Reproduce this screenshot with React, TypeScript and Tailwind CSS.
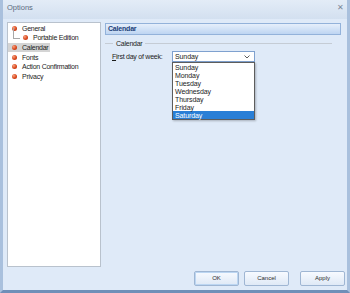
import React from "react";

const font = { fontFamily: '"Liberation Sans", Arial, sans-serif' };

const Bullet: React.FC = () => (
  <span className="inline-block w-[5px] h-[5px] rounded-full bg-[radial-gradient(circle_at_35%_35%,#f7a27e_0%,#d9461c_55%,#a82b0c_100%)] shrink-0" />
);

const TreeItem: React.FC<{ label: string; indent?: boolean; selected?: boolean }> = ({
  label,
  indent,
  selected,
}) => (
  <div className="h-[9.6px] flex items-center relative">
    {indent && (
      <>
        <span className="absolute left-[5px] top-[-5px] w-px h-[10px] bg-[#a8a8a8]" />
        <span className="absolute left-[5px] top-[4.5px] w-[7px] h-px bg-[#a8a8a8]" />
      </>
    )}
    <div
      className={`flex items-center h-[9px] pr-[2px] ${indent ? "pl-[15px]" : "pl-[4px]"} ${
        selected ? "bg-[#d4d4d4]" : ""
      }`}
    >
      <Bullet />
      <span className="ml-[5px] text-[7px] leading-none tracking-[-0.25px] text-[#1b1b1b]">{label}</span>
    </div>
  </div>
);

const days = ["Sunday", "Monday", "Tuesday", "Wednesday", "Thursday", "Friday", "Saturday"];

const Button: React.FC<{ label: string; primary?: boolean; className?: string }> = ({ label, primary, className }) => (
  <div
    className={`w-[45px] h-[15px] flex items-center justify-center rounded-[2px] border border-[#9fb6d3] bg-gradient-to-b from-[#f7faff] to-[#dfe9f6] text-[6px] text-[#2b2b2b] ${
      primary ? "shadow-[inset_0_0_0_1px_#bcd6f2]" : ""
    } ${className ?? ""}`}
  >
    {label}
  </div>
);

export default function App() {
  return (
    <div
      style={font}
      className="w-[350px] h-[293px] flex flex-col bg-[#dfeaf8] border-l-[3px] border-r-[3px] border-b-[3px] border-l-[#a9c0dd] border-r-[#a9c0dd] border-b-[#6f8fb8] overflow-hidden"
    >
      {/* title bar */}
      <div className="h-[19px] shrink-0 flex items-center justify-between pl-[4px] pr-[3px] bg-gradient-to-b from-[#e3ecf7] to-[#d3e0f0]">
        <span className="text-[7.5px] text-[#5b6b80] -mt-[3px]">Options</span>
        <span className="text-[8px] text-[#7b8898] -mt-[4px]">✕</span>
      </div>

      <div className="flex-1 flex flex-col">
        <div className="flex mt-[3px] pl-[4px] pr-[6px] h-[245px]">
          {/* tree */}
          <div className="w-[94px] h-full bg-white border border-[#b9c2cd] pt-[0.5px]">
            <TreeItem label="General" />
            <TreeItem label="Portable Edition" indent />
            <TreeItem label="Calendar" selected />
            <TreeItem label="Fonts" />
            <TreeItem label="Action Confirmation" />
            <TreeItem label="Privacy" />
          </div>

          {/* right panel */}
          <div className="flex-1 ml-[4px] pt-[1px] relative">
            <div className="h-[12px] flex items-center pl-[2px] border border-[#93b2da] bg-gradient-to-b from-[#e6effb] to-[#bed5f2]">
              <span className="text-[7px] font-bold text-[#1c3f78] tracking-[-0.2px]">Calendar</span>
            </div>

            <div className="flex items-center mt-[7px] h-[2px]">
              <span className="w-[8px] h-px bg-[#c5ccd5]" />
              <span className="mx-[3px] text-[7px] leading-none tracking-[-0.25px] text-[#1b1b1b]">Calendar</span>
              <span className="w-[187px] h-px bg-[#c5ccd5]" />
            </div>

            <div className="flex items-center mt-[7px] h-[11px] pl-[7px]">
              <span className="w-[60px] text-[7px] leading-none tracking-[-0.25px] text-[#1b1b1b]">
                <span className="underline">F</span>irst day of week:
              </span>
              <div className="w-[83px] h-[11px] border border-[#7fa1cf] bg-white flex items-center justify-between pl-[2px] pr-[4px]">
                <span className="text-[7px] leading-none tracking-[-0.1px] text-[#1b1b1b]">Sunday</span>
                <svg width="6" height="4" viewBox="0 0 6 4">
                  <path d="M0.5 0.5 L3 3 L5.5 0.5" stroke="#4a4a4a" strokeWidth="0.9" fill="none" />
                </svg>
              </div>
            </div>

            {/* dropdown list */}
            <div className="absolute left-[67px] top-[40px] w-[83px] border border-[#5d5d5d] bg-white shadow-[1px_1px_2px_rgba(0,0,0,0.25)]">
              {days.map((d) => (
                <div
                  key={d}
                  className={`h-[8px] flex items-center pl-[2px] text-[7px] leading-none tracking-[-0.1px] ${
                    d === "Saturday" ? "bg-[#2a7fd6] text-white" : "text-[#1b1b1b]"
                  }`}
                >
                  {d}
                </div>
              ))}
            </div>
          </div>
        </div>

        <div className="flex justify-end items-center mt-[4px] pr-[2px]">
          <Button label="OK" primary />
          <Button label="Cancel" className="ml-[5px]" />
          <Button label="Apply" className="ml-[11px]" />
        </div>
      </div>
    </div>
  );
}
